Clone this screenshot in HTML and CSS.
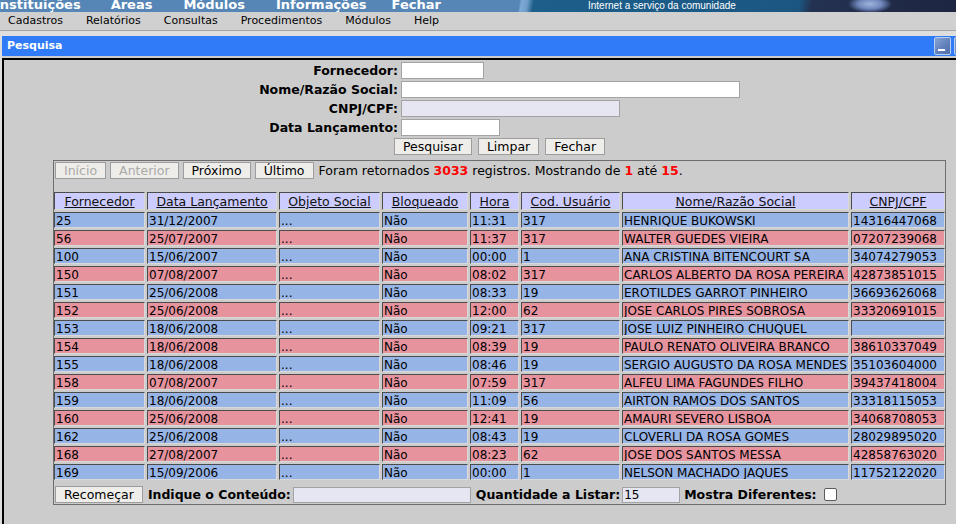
FILE: index.html
```html
<!DOCTYPE html>
<html lang="pt-BR">
<head>
<meta charset="utf-8">
<title>Pesquisa</title>
<link rel="stylesheet" href="styles.css">
</head>
<body>
<div class="banner">
  <div class="banner-menu">
    <span class="bm bm-first">Instituições</span>
    <span class="bm bm-areas">Areas</span>
    <span class="bm bm-mod">Módulos</span>
    <span class="bm bm-info">Informações</span>
    <span class="bm bm-fechar">Fechar</span>
  </div>
  <span class="slogan">Internet a serviço da comunidade</span>
</div>
<div class="menubar">
  <span>Cadastros</span>
  <span>Relatórios</span>
  <span>Consultas</span>
  <span>Procedimentos</span>
  <span>Módulos</span>
  <span>Help</span>
</div>
<div class="window">
  <div class="titlebar">
    <span class="title">Pesquisa</span>
    <div class="tbtns">
      <span class="tbtn tmin"></span>
      <span class="tbtn tmax"></span>
      <span class="tbtn tclose"></span>
    </div>
  </div>
  <div class="content">
    <div class="form">
      <label class="lbl">Fornecedor:</label>
      <div><input class="in in-forn" type="text"></div>
      <label class="lbl">Nome/Razão Social:</label>
      <div><input class="in in-nome" type="text"></div>
      <label class="lbl">CNPJ/CPF:</label>
      <div><input class="in in-cnpj ro" type="text"></div>
      <label class="lbl">Data Lançamento:</label>
      <div><input class="in in-data" type="text"></div>
      <div class="form-btns">
        <button class="btn">Pesquisar</button>
        <button class="btn">Limpar</button>
        <button class="btn">Fechar</button>
      </div>
    </div>

    <div class="frame">
      <div class="nav">
        <button class="btn" disabled>Início</button>
        <button class="btn" disabled>Anterior</button>
        <button class="btn">Próximo</button>
        <button class="btn">Último</button>
        <span class="navtext">Foram retornados <b class="red">3033</b> registros. Mostrando de <b class="red">1</b> até <b class="red">15</b>.</span>
      </div>
      <div class="grid">
        <div class="th"><u>Fornecedor</u></div>
        <div class="th"><u>Data Lançamento</u></div>
        <div class="th"><u>Objeto Social</u></div>
        <div class="th"><u>Bloqueado</u></div>
        <div class="th"><u>Hora</u></div>
        <div class="th"><u>Cod. Usuário</u></div>
        <div class="th"><u>Nome/Razão Social</u></div>
        <div class="th"><u>CNPJ/CPF</u></div>

        <div class="td b">25</div><div class="td b">31/12/2007</div><div class="td b">...</div><div class="td b">Não</div><div class="td b">11:31</div><div class="td b">317</div><div class="td b">HENRIQUE BUKOWSKI</div><div class="td b">14316447068</div>
        <div class="td p">56</div><div class="td p">25/07/2007</div><div class="td p">...</div><div class="td p">Não</div><div class="td p">11:37</div><div class="td p">317</div><div class="td p">WALTER GUEDES VIEIRA</div><div class="td p">07207239068</div>
        <div class="td b">100</div><div class="td b">15/06/2007</div><div class="td b">...</div><div class="td b">Não</div><div class="td b">00:00</div><div class="td b">1</div><div class="td b">ANA CRISTINA BITENCOURT SA</div><div class="td b">34074279053</div>
        <div class="td p">150</div><div class="td p">07/08/2007</div><div class="td p">...</div><div class="td p">Não</div><div class="td p">08:02</div><div class="td p">317</div><div class="td p">CARLOS ALBERTO DA ROSA PEREIRA</div><div class="td p">42873851015</div>
        <div class="td b">151</div><div class="td b">25/06/2008</div><div class="td b">...</div><div class="td b">Não</div><div class="td b">08:33</div><div class="td b">19</div><div class="td b">EROTILDES GARROT PINHEIRO</div><div class="td b">36693626068</div>
        <div class="td p">152</div><div class="td p">25/06/2008</div><div class="td p">...</div><div class="td p">Não</div><div class="td p">12:00</div><div class="td p">62</div><div class="td p">JOSE CARLOS PIRES SOBROSA</div><div class="td p">33320691015</div>
        <div class="td b">153</div><div class="td b">18/06/2008</div><div class="td b">...</div><div class="td b">Não</div><div class="td b">09:21</div><div class="td b">317</div><div class="td b">JOSE LUIZ PINHEIRO CHUQUEL</div><div class="td b"></div>
        <div class="td p">154</div><div class="td p">18/06/2008</div><div class="td p">...</div><div class="td p">Não</div><div class="td p">08:39</div><div class="td p">19</div><div class="td p">PAULO RENATO OLIVEIRA BRANCO</div><div class="td p">38610337049</div>
        <div class="td b">155</div><div class="td b">18/06/2008</div><div class="td b">...</div><div class="td b">Não</div><div class="td b">08:46</div><div class="td b">19</div><div class="td b">SERGIO AUGUSTO DA ROSA MENDES</div><div class="td b">35103604000</div>
        <div class="td p">158</div><div class="td p">07/08/2007</div><div class="td p">...</div><div class="td p">Não</div><div class="td p">07:59</div><div class="td p">317</div><div class="td p">ALFEU LIMA FAGUNDES FILHO</div><div class="td p">39437418004</div>
        <div class="td b">159</div><div class="td b">18/06/2008</div><div class="td b">...</div><div class="td b">Não</div><div class="td b">11:09</div><div class="td b">56</div><div class="td b">AIRTON RAMOS DOS SANTOS</div><div class="td b">33318115053</div>
        <div class="td p">160</div><div class="td p">25/06/2008</div><div class="td p">...</div><div class="td p">Não</div><div class="td p">12:41</div><div class="td p">19</div><div class="td p">AMAURI SEVERO LISBOA</div><div class="td p">34068708053</div>
        <div class="td b">162</div><div class="td b">25/06/2008</div><div class="td b">...</div><div class="td b">Não</div><div class="td b">08:43</div><div class="td b">19</div><div class="td b">CLOVERLI DA ROSA GOMES</div><div class="td b">28029895020</div>
        <div class="td p">168</div><div class="td p">27/08/2007</div><div class="td p">...</div><div class="td p">Não</div><div class="td p">08:23</div><div class="td p">62</div><div class="td p">JOSE DOS SANTOS MESSA</div><div class="td p">42858763020</div>
        <div class="td b">169</div><div class="td b">15/09/2006</div><div class="td b">...</div><div class="td b">Não</div><div class="td b">00:00</div><div class="td b">1</div><div class="td b">NELSON MACHADO JAQUES</div><div class="td b">11752122020</div>
      </div>
      <div class="bottombar">
        <button class="btn">Recomeçar</button>
        <span class="blbl bl-ind">Indique o Conteúdo:</span>
        <input class="in ro in-cont" type="text">
        <span class="blbl bl-qtd">Quantidade a Listar:</span>
        <input class="in ro in-qtd" type="text" value="15">
        <span class="blbl bl-most">Mostra Diferentes:</span>
        <input class="chk" type="checkbox">
      </div>
    </div>
  </div>
</div>
</body>
</html>
```
FILE: styles.css
```css
html, body {
  margin: 0;
  padding: 0;
  overflow: hidden;
}
body {
  width: 956px;
  height: 524px;
  background: #dedede;
  font-family: "DejaVu Sans", sans-serif;
  font-size: 12px;
  color: #000;
}

/* ---------- banner ---------- */
.banner {
  position: relative;
  height: 12px;
  overflow: hidden;
  background:
    radial-gradient(ellipse 22px 9px at 870px 4px, #9fb4dc 0, #6f86bb 55%, rgba(40,50,90,0) 100%),
    linear-gradient(100deg,
      #5686b6 0, #5686b6 512px,
      #7eaad6 514px, #6e9cc8 520px,
      #1d5e8a 526px, #1b5a86 700px, #1c5680 788px,
      #243252 800px, #1f2945 900px, #1c2440 956px);
}
.banner-menu {
  display: flex;
  margin-top: -3px;
  font-weight: bold;
  font-size: 13px;
  line-height: 15px;
  color: #fff;
  white-space: nowrap;
}
.bm-first { margin-left: -5px; }
.bm-areas { margin-left: 30px; }
.bm-mod { margin-left: 31px; }
.bm-info { margin-left: 31px; }
.bm-fechar { margin-left: 25px; }
.slogan {
  position: absolute;
  left: 588px;
  top: 0;
  font-family: "Liberation Sans", sans-serif;
  font-size: 10px;
  line-height: 11px;
  color: #fff;
  white-space: nowrap;
}

/* ---------- menubar ---------- */
.menubar {
  height: 18px;
  background: #d0d0d0;
  border-bottom: 1px solid #a4a4a4;
  display: flex;
  gap: 23px;
  padding-left: 8px;
  font-size: 11px;
  line-height: 18px;
  color: #000;
}

/* ---------- window ---------- */
.window {
  margin-top: 5px;
  margin-left: 2px;
  width: 993px;
  background: #cccccc;
}
.titlebar {
  height: 20px;
  background: #2f7bf8;
  display: flex;
  align-items: center;
  padding-left: 5px;
  padding-right: 4px;
}
.title {
  color: #fff;
  font-weight: bold;
  font-size: 11px;
  line-height: 20px;
}
.tbtns {
  margin-left: auto;
  display: flex;
  gap: 3px;
}
.tbtn {
  position: relative;
  width: 17px;
  height: 18px;
  box-sizing: border-box;
  border: 1px solid #b9cdf0;
  border-radius: 2px;
  background: linear-gradient(135deg, #8ba6d6 0%, #6584bd 50%, #4e6ca6 100%);
}
.tmin::after {
  content: "";
  position: absolute;
  left: 3px;
  bottom: 3px;
  width: 7px;
  height: 2px;
  background: #fff;
}
.tmax::after {
  content: "";
  position: absolute;
  left: 3px;
  top: 3px;
  width: 8px;
  height: 8px;
  box-sizing: border-box;
  border: 1px solid #fff;
  border-top-width: 2px;
}
.tclose::after {
  content: "\00d7";
  position: absolute;
  left: 0;
  top: 0;
  width: 15px;
  line-height: 16px;
  text-align: center;
  color: #fff;
  font-size: 13px;
  font-weight: bold;
}

.content {
  margin-top: 2px;
  border-top: 2px solid #000;
  border-left: 2px solid #000;
  height: 470px;
}

/* ---------- form ---------- */
.form {
  display: grid;
  grid-template-columns: 139px 339px;
  justify-content: center;
  column-gap: 3px;
  row-gap: 2px;
  padding-top: 2px;
}
.lbl {
  font-weight: bold;
  font-size: 12.5px;
  text-align: right;
  line-height: 17px;
  white-space: nowrap;
}
.in {
  display: block;
  box-sizing: border-box;
  height: 17px;
  margin: 0;
  padding: 0 1px;
  border: 1px solid #a3a3a3;
  background: #fff;
  font-family: "DejaVu Sans", sans-serif;
  font-size: 12px;
  color: #000;
  outline: none;
}
.in.ro { background: #e6e6f2; }
.in-forn { width: 83px; }
.in-nome { width: 339px; }
.in-cnpj { width: 219px; }
.in-data { width: 99px; }

.form-btns {
  grid-column: 1 / -1;
  display: flex;
  justify-content: center;
  gap: 6px;
}

.btn {
  box-sizing: border-box;
  height: 17px;
  margin: 0;
  padding: 0 8px;
  border: 1px solid #9d9d9d;
  border-radius: 0;
  background: #efedea;
  font-family: "DejaVu Sans", sans-serif;
  font-size: 12.5px;
  line-height: 15px;
  color: #000;
}
.btn:disabled { color: #a9a9a9; }

/* ---------- results frame ---------- */
.frame {
  width: 893px;
  box-sizing: border-box;
  margin: 5px auto 0;
  border: 1px solid #6e6e6e;
}
.nav {
  height: 31px;
  box-sizing: border-box;
  padding: 1px 0 0 1px;
  display: flex;
  align-items: flex-start;
  gap: 4px;
}
.navtext {
  font-size: 12.5px;
  line-height: 17px;
  white-space: nowrap;
  margin-left: 1px;
}
.red { color: #ff0000; }

.grid {
  display: grid;
  grid-template-columns: 91px 130px 101px 86px 49px 99px 227px 94px;
  gap: 2px;
}
.th, .td {
  box-sizing: border-box;
  border-top: 1px solid #4c4c4c;
  border-left: 1px solid #4c4c4c;
  border-right: 1px solid #d9d9d9;
  border-bottom: 1px solid #d9d9d9;
  white-space: nowrap;
  overflow: hidden;
}
.th {
  height: 18px;
  padding-top: 3px;
  font-size: 12.5px;
  line-height: 12px;
  background: #ccccff;
  text-align: center;
  color: #111;
}
.td {
  height: 16px;
  padding: 2px 0 0 1px;
  line-height: 12px;
}
.td.b { background: #97b4e6; }
.td.p { background: #e7939e; }

.bottombar {
  margin-top: 2px;
  height: 22px;
  box-sizing: border-box;
  padding: 4px 0 0 1px;
  display: flex;
  align-items: flex-start;
}
.blbl {
  font-weight: bold;
  font-size: 12.5px;
  line-height: 17px;
  white-space: nowrap;
}
.bl-ind { margin-left: 5px; }
.bl-qtd { margin-left: 5px; }
.bl-most { margin-left: 4px; }
.in-cont { width: 178px; height: 16px; margin-left: 2px; margin-top: 1px; }
.in-qtd { width: 58px; height: 16px; margin-left: 2px; margin-top: 1px; }
.chk {
  -webkit-appearance: none;
  appearance: none;
  width: 13px;
  height: 13px;
  margin: 2px 0 0 7px;
  box-sizing: border-box;
  border: 1px solid #5a5a5a;
  border-radius: 2px;
  background: #fff;
}
```
